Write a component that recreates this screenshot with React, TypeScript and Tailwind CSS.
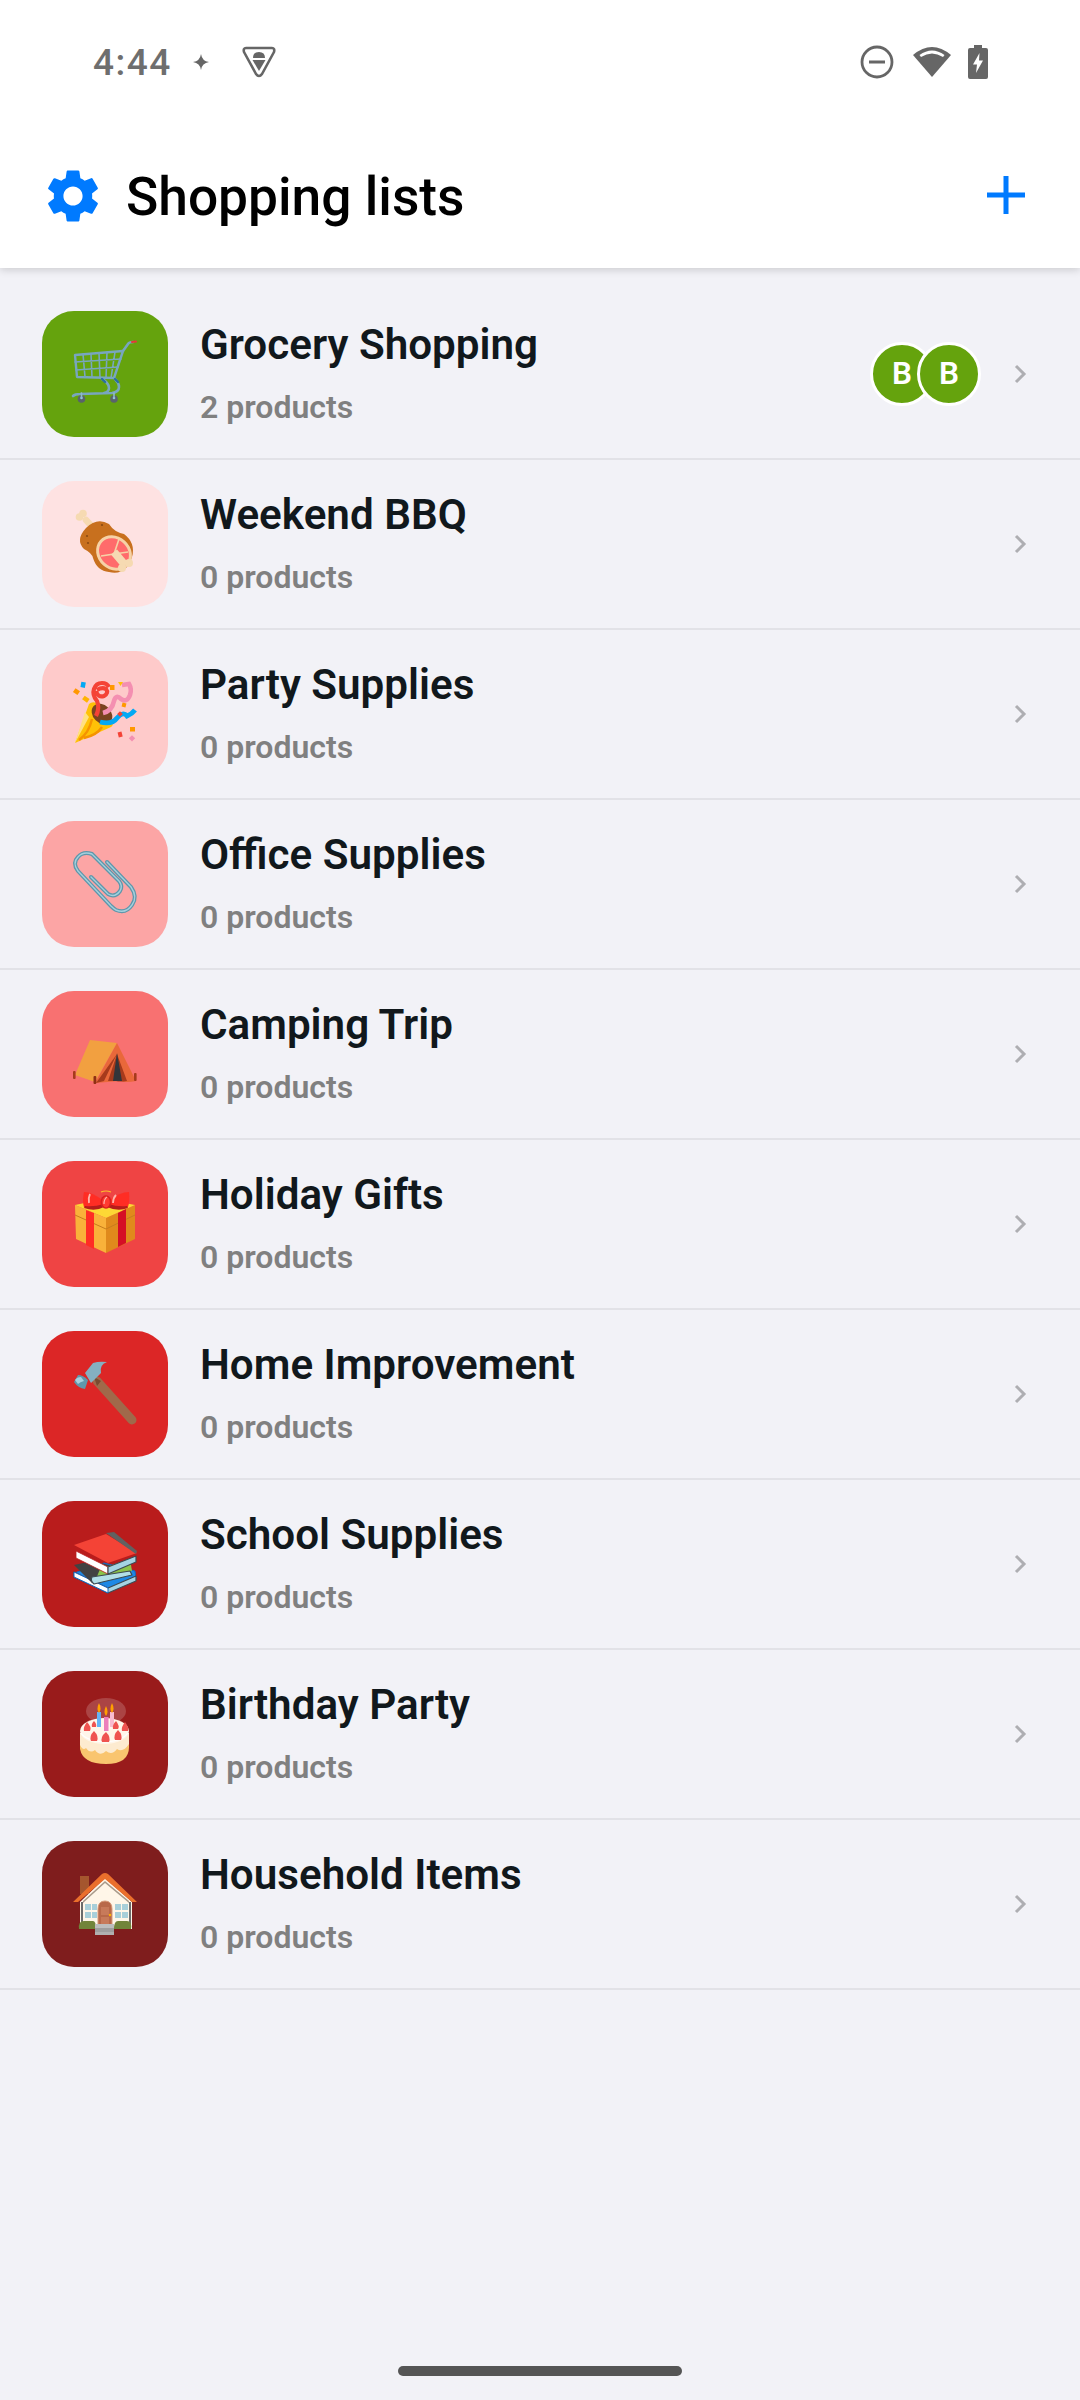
import React from "react";
import { MdSettings } from "react-icons/md";

const Cart = () => (
  <g fill="none" strokeLinecap="round" strokeLinejoin="round">
    <path d="M33 44 L81 40 L72 67 L35 66 Z" stroke="#78a6bf" strokeWidth="2.4" fill="none" />
    <path d="M33 51 L79 48 M34 59 L76 56 M41 43 L43 66 M49 43 L50 66 M57 42 L58 67 M65 41 L64 67 M73 41 L69 67" stroke="#78a6bf" strokeWidth="1.6" />
    <path d="M81 40 L86 33 Q87 31 91 31" stroke="#78a6bf" strokeWidth="2.6" />
    <path d="M90 31 L94 30.5" stroke="#e53935" strokeWidth="2" />
    <path d="M31 85 Q33 83 38 83 L70 82 Q77 81 77 76 Q77 72 73 68 M60 68 Q67 72 67 77 Q67 81 62 82" stroke="#78a6bf" strokeWidth="2.6" />
    <path d="M60 68 L63 71 M73 68 L76 71" stroke="#2a6f9e" strokeWidth="2.4" />
    <circle cx="39.5" cy="88" r="3.8" fill="#59636b" />
    <circle cx="72" cy="88" r="3.8" fill="#59636b" />
    <circle cx="39.5" cy="87" r="1.3" fill="#8fc4dc" />
    <circle cx="72" cy="87" r="1.3" fill="#8fc4dc" />
    <path d="M39.5 82 V86 M72 82 V86" stroke="#8fb8cc" strokeWidth="1.6" />
  </g>
);

const Meat = () => (
  <g>
    <path d="M44 39 L54 50" stroke="#f6dab2" strokeWidth="6.5" strokeLinecap="round" />
    <circle cx="37.5" cy="36" r="3.8" fill="#f6dab2" />
    <circle cx="41" cy="32.5" r="3.8" fill="#f6dab2" />
    <path d="M44 47 Q55 36 67 43 Q72 51 82 53 Q94 62 90 76 Q84 95 67 91 Q55 90 51 77 Q50 72 42 68 Q33 59 44 47 Z" fill="#c8701e" />
    <circle cx="45" cy="55" r="1.1" fill="#8a4a12" />
    <circle cx="46" cy="62" r="1.1" fill="#8a4a12" />
    <circle cx="60" cy="44" r="1.1" fill="#8a4a12" />
    <ellipse cx="72" cy="72" rx="16.5" ry="19" transform="rotate(-48 72 72)" fill="#f6d2a6" />
    <ellipse cx="72" cy="72" rx="13.5" ry="16" transform="rotate(-48 72 72)" fill="#ff6b6b" />
    <path d="M59 75 L72 73 L77 58 M72 73 L86 71" stroke="#f6d2a6" strokeWidth="1.6" fill="none" />
    <path d="M72 71 L83 84" stroke="#f6dab2" strokeWidth="8" strokeLinecap="butt" />
    <circle cx="80" cy="87" r="4" fill="#f6dab2" />
    <circle cx="87" cy="82" r="4" fill="#f6dab2" />
  </g>
);

const Party = () => (
  <g fill="none">
    <path d="M33 92 L47 53 Q50 50 55 52 L70 70 Q72 74 69 76 Z" fill="#ffc107" />
    <path d="M33 92 L43 61 L47 66 Z" fill="#ffe082" />
    <path d="M37 89 Q47 82 50 68 M42 87 Q55 84 60 76" stroke="#f59300" strokeWidth="2.4" />
    <ellipse cx="60" cy="63" rx="9" ry="11.5" transform="rotate(-45 60 63)" fill="#7a4420" />
    <path d="M54 65 Q58 57 55 50 Q50 44 52 38 Q54 32 60 32 Q65 32 67 36 M54 40 Q56 47 62 45 Q67 42 64 38 Q60 36 55 39" stroke="#f44336" strokeWidth="4.2" />
    <path d="M61 62 Q70 60 72 50 Q74 43 79 48 Q85 52 88 44 Q90 38 87 33 L80 34" stroke="#f48fb1" strokeWidth="4.6" />
    <path d="M58 71 Q70 74 75 67 Q81 60 85 65 Q90 63 93 59" stroke="#03a9f4" strokeWidth="4.8" />
    <rect x="32" y="38" width="5.5" height="4.5" fill="#ff9800" transform="rotate(35 34 40)" />
    <rect x="39" y="31" width="4.5" height="5.5" fill="#03a9f4" transform="rotate(10 41 33)" />
    <rect x="41" y="46" width="6" height="4.5" fill="#ffb300" transform="rotate(35 44 48)" />
    <rect x="68" y="34" width="4.5" height="5" fill="#ff9800" />
    <path d="M76 31 H81 L78.5 35 Z" fill="#ffc107" />
    <rect x="80" y="52" width="4" height="4" fill="#ff9800" transform="rotate(15 82 54)" />
    <rect x="76" y="61" width="4" height="4" fill="#f44336" transform="rotate(45 78 63)" />
    <rect x="88" y="76" width="5" height="4.5" fill="#ff9800" />
    <rect x="76" y="81" width="4" height="5" fill="#f44336" transform="rotate(-15 78 83)" />
    <rect x="88" y="85" width="4.5" height="4.5" fill="#f48fb1" transform="rotate(45 90 87)" />
  </g>
);

const Clip = () => (
  <g fill="none" strokeLinecap="round">
    <path d="M65 41 L89 66 Q96 76 90 84 Q84 93 74 89 Q72 88 69 85 L36 50 Q30 42 36 36 Q41 30 50 33 L77 60 Q81 65 78 70 Q73 77 66 73 L49 56" stroke="#5f97ab" strokeWidth="4" />
    <path d="M65 41 L89 66 Q96 76 90 84 Q84 93 74 89 Q72 88 69 85 L36 50 Q30 42 36 36 Q41 30 50 33 L77 60 Q81 65 78 70 Q73 77 66 73 L49 56" stroke="#a5d0dd" strokeWidth="1.4" />
  </g>
);

const Tent = () => (
  <g>
    <path d="M48 49 L75 52 L53 91 L33 84 Z" fill="#f2a040" />
    <path d="M75 52 L94 90 Q84 92 78 90 L53 92 Z" fill="#e9683a" />
    <path d="M75 63 L85 90 Q78 91 74 90 L66 90 Z M75 63 L62 90 L54 92 Z" fill="#a63a1c" />
    <path d="M75 62 L80 90 L71 90 Z" fill="#33353a" />
    <rect x="31" y="80" width="2.6" height="8" rx="1" fill="#a63a1c" />
    <rect x="51.5" y="85" width="2.8" height="8" rx="1" fill="#8e2f14" />
    <rect x="92" y="82" width="2.6" height="8" rx="1" fill="#a63a1c" />
  </g>
);

const Gift = () => (
  <g>
    <path d="M33 44 L64 57 V92 L34 78 Z" fill="#f9b23a" />
    <path d="M64 57 L93 44 V78 L64 92 Z" fill="#e08a1c" />
    <path d="M33 44 L62 38 L93 44 L64 57 Z" fill="#fdd835" />
    <path d="M33 54 L64 68 L93 54" stroke="#c77d1c" strokeWidth="1" fill="none" />
    <path d="M44 49 L52 52 V88 L44 84 Z" fill="#ff2d24" />
    <path d="M76 52 L84 48 V82 L76 86 Z" fill="#d50f25" />
    <path d="M62 40 Q50 31 42 31 Q40 40 42 46 Q52 49 62 44 Z" fill="#ff2d24" />
    <path d="M66 40 Q78 31 87 31 Q88 40 86 46 Q76 49 66 44 Z" fill="#ff2d24" />
    <path d="M42 47 Q53 51 62 46 L65 46 Q76 51 86 47 L85 45 Q76 46 66 43 L62 43 Q52 46 43 45 Z" fill="#b71c1c" />
    <ellipse cx="64" cy="41" rx="5.5" ry="6.8" fill="#d81f1f" />
    <ellipse cx="64" cy="41" rx="3.8" ry="5.4" fill="#ff3b30" />
    <path d="M62 43 Q62 38 65 36" stroke="#ffb4ab" strokeWidth="1.2" fill="none" />
    <path d="M47 42 Q46 37 48 33 M71 42 Q71 37 74 34" stroke="#ffb4ab" strokeWidth="1.8" fill="none" />
    <path d="M59 31 Q64 29 69 31" stroke="#fbc02d" strokeWidth="1.2" fill="none" />
  </g>
);

const Hammer = () => (
  <g>
    <path d="M55 50 L90 89" stroke="#a0694a" strokeWidth="9" strokeLinecap="round" />
    <path d="M52 46 L59 50 L55 55 Z" fill="#7a4a30" />
    <path d="M43 42 L51 32 Q57 30 65 31 Q57 34 59 42 L49 52 Z" fill="#84b0c1" />
    <path d="M36 44 Q41 44 46 49 L43 58 Q36 57 32 51 Z" fill="#5f97ab" />
    <path d="M33 49 Q35 46 39 46 L42 50 Q38 51 36 53 Z" fill="#a5d0dd" />
  </g>
);

const Books = () => (
  <g strokeLinejoin="round">
    <path d="M32 72 L65 88 L94 78 L93 70 L62 62 Z" fill="#1e88e5" stroke="#1565c0" strokeWidth="1" />
    <path d="M32 76 L66 92 L94 80 L94 75 L66 87 L32 71 Z" fill="#a5d3e3" stroke="#3e4a52" strokeWidth="1.2" />
    <path d="M32 76 L66 92 V87 L32 71 Z" fill="#ffffff" stroke="#1565c0" strokeWidth="1" />
    <path d="M32 64 L50 82 L90 74 L88 70 Q70 64 50 60 Z" fill="#424242" />
    <path d="M58 68 L88 58 L90 70 L54 78 Z" fill="#8bc34a" />
    <path d="M50 76 L88 70 L90 74 L52 83 Q48 80 50 76 Z" fill="#b2dfe8" stroke="#3e4a52" strokeWidth="1.2" />
    <path d="M32 44 L66 62 L95 52 L64 33 Z" fill="#f44336" />
    <path d="M64 32 L72 31 L95 50 L94 53 Z" fill="#616161" />
    <path d="M34 50 L66 66 V73 L34 57 Z" fill="#ffffff" stroke="#b71c1c" strokeWidth="0.8" />
    <path d="M66 66 L94 55 L94 61 L66 73 Z" fill="#a5d3e3" stroke="#3e4a52" strokeWidth="1.2" />
  </g>
);

const Cake = () => (
  <g>
    <ellipse cx="64" cy="40" rx="20" ry="13" fill="#ffffff" opacity="0.18" />
    <path d="M38 62 V78 Q41 93 64 93 Q87 93 87 76 V62 Z" fill="#f9c56f" />
    <path d="M38 62 V74 Q41 80 44 77 Q48 83 53 79 Q58 86 64 80 Q70 85 75 78 Q81 82 87 73 V62 Z" fill="#fdebd0" />
    <ellipse cx="62.5" cy="60" rx="24.5" ry="13" fill="#fff6ea" />
    <path d="M39 62 Q44 70 64 71 Q80 70 86 62" stroke="#ffffff" strokeWidth="1.2" fill="none" />
    <rect x="55" y="41" width="4" height="15" fill="#64b5f6" />
    <rect x="62" y="46" width="4.5" height="14" fill="#ec7fbb" />
    <rect x="68" y="41" width="4" height="15" fill="#f8bbd0" />
    <path d="M57 32 Q60 38 57 42 Q54 38 57 32 Z" fill="#ffa000" />
    <path d="M64 35 Q67 41 64 45 Q61 41 64 35 Z" fill="#ffa000" />
    <path d="M70 32 Q73 38 70 42 Q67 38 70 32 Z" fill="#ffa000" />
    <g fill="#ef5350">
      <path d="M45 51 Q50 56 48 60 H42 Q41 56 45 51 Z" />
      <path d="M74 50 Q78 55 76 58 H71 Q70 54 74 50 Z" />
      <path d="M83 51 Q87 56 86 60 H80 Q79 56 83 51 Z" />
      <path d="M52 60 Q57 65 55 70 H49 Q47 65 52 60 Z" />
      <path d="M64 61 Q69 66 67 71 H60 Q58 66 64 61 Z" />
      <path d="M76 59 Q81 64 79 69 H73 Q71 64 76 59 Z" />
      <path d="M52 50 Q55 53 54 56 H50 Q49 53 52 50 Z" />
    </g>
  </g>
);

const House = () => (
  <g>
    <rect x="38" y="35" width="9" height="18" fill="#a5562e" />
    <path d="M38 61 L63 37 L90 61 V88 H38 Z" fill="#fff6e8" />
    <path d="M41 60 L63 40 L87 60 V62 L63 42 L41 62 Z" fill="#a89a8a" />
    <path d="M31 61 L60 33 Q63 31 66 33 L95 61 H90 L63 38 L36 61 Z" fill="#ea6f2c" />
    <rect x="39" y="61" width="2" height="26" fill="#6b6b6b" />
    <rect x="87" y="61" width="2" height="26" fill="#6b6b6b" />
    <g fill="#a8cfd9">
      <rect x="43" y="63" width="6" height="6" />
      <rect x="50" y="63" width="5" height="6" />
      <rect x="43" y="71" width="6" height="6" />
      <rect x="50" y="71" width="5" height="6" />
      <rect x="73" y="63" width="6" height="6" />
      <rect x="80" y="63" width="6" height="6" />
      <rect x="73" y="71" width="6" height="6" />
      <rect x="80" y="71" width="6" height="6" />
    </g>
    <path d="M56 86 V68 Q56 60 63 60 Q70 60 70 68 V86 Z" fill="#b8694a" stroke="#d69a7a" strokeWidth="1" />
    <rect x="59" y="66" width="8" height="8" fill="#c77a5a" />
    <rect x="59" y="76" width="8" height="8" fill="#c77a5a" />
    <circle cx="68" cy="74" r="1.2" fill="#ffb300" />
    <path d="M37 88 Q36 80 42 80 H51 Q54 80 54 88 Z" fill="#71843a" />
    <path d="M72 88 Q72 80 76 80 H85 Q90 80 89 88 Z" fill="#71843a" />
    <rect x="53" y="83" width="19" height="4" fill="#bdbdbd" />
    <rect x="53" y="87" width="19" height="4" fill="#9e9e9e" />
    <rect x="53" y="91" width="19" height="3" fill="#b0b0b0" />
  </g>
);

const items: { title: string; sub: string; bg: string; art: React.ReactNode; avatars?: boolean }[] = [
  { title: "Grocery Shopping", sub: "2 products", bg: "bg-[#65a30d]", art: <Cart />, avatars: true },
  { title: "Weekend BBQ", sub: "0 products", bg: "bg-[#fee2e2]", art: <Meat /> },
  { title: "Party Supplies", sub: "0 products", bg: "bg-[#fecaca]", art: <Party /> },
  { title: "Office Supplies", sub: "0 products", bg: "bg-[#fca5a5]", art: <Clip /> },
  { title: "Camping Trip", sub: "0 products", bg: "bg-[#f87171]", art: <Tent /> },
  { title: "Holiday Gifts", sub: "0 products", bg: "bg-[#ef4444]", art: <Gift /> },
  { title: "Home Improvement", sub: "0 products", bg: "bg-[#dc2626]", art: <Hammer /> },
  { title: "School Supplies", sub: "0 products", bg: "bg-[#b91c1c]", art: <Books /> },
  { title: "Birthday Party", sub: "0 products", bg: "bg-[#991b1b]", art: <Cake /> },
  { title: "Household Items", sub: "0 products", bg: "bg-[#7f1d1d]", art: <House /> },
];

const Avatar = ({ overlap }: { overlap?: boolean }) => (
  <div
    className={`flex h-[64px] w-[64px] items-center justify-center rounded-full border-[3px] border-white bg-[#65a30d] text-[31.5px] font-semibold text-white ${overlap ? "-ml-[17px]" : ""}`}
  >
    B
  </div>
);

const Chevron = () => (
  <svg width="14" height="20" viewBox="0 0 14 20" className="shrink-0">
    <path d="M3 2 L11 10 L3 18" fill="none" stroke="#aeaeb2" strokeWidth="3" />
  </svg>
);

const Row = ({ item }: { item: (typeof items)[number] }) => (
  <div className="flex h-[170px] items-center border-b-2 border-[#e2e2e7] pl-[42px] pr-[53px]">
    <div className={`h-[126px] w-[126px] shrink-0 rounded-[32px] ${item.bg}`}>
      <svg width="126" height="126" viewBox="0 0 126 126">
        {item.art}
      </svg>
    </div>
    <div className="ml-[32px] flex min-w-0 flex-1 flex-col pb-[3px]">
      <div className="text-[42.2px] font-semibold leading-[52px] text-[#11181c]">{item.title}</div>
      <div className="mt-[16px] text-[32px] font-semibold leading-[40px] text-[#808080]">{item.sub}</div>
    </div>
    {item.avatars && (
      <div className="mr-[32px] flex">
        <Avatar />
        <Avatar overlap />
      </div>
    )}
    <Chevron />
  </div>
);

export default function App() {
  return (
    <div className="flex h-[2400px] w-[1080px] flex-col bg-[#f2f2f7] font-['Roboto',sans-serif]">
      <header className="relative z-10 h-[268px] shrink-0 bg-white shadow-[0_2px_8px_rgba(0,0,0,0.16)]">
        <div className="flex h-[124px] items-center pl-[93px] pr-[92px]">
          <span className="text-[37px] font-medium leading-none tracking-[1.5px] text-[#6e6e6e]">4:44</span>
          <svg width="16" height="16" viewBox="0 0 16 16" className="ml-[21px]">
            <path d="M8 0 Q9 7 16 8 Q9 9 8 16 Q7 9 0 8 Q7 7 8 0 Z" fill="#666666" />
          </svg>
          <svg width="34" height="34" viewBox="0 0 34 34" className="ml-[33px]">
            <path d="M4 3 H30 Q33 3 32 7 L20 29 Q17 33 14 29 L2 7 Q1 3 4 3 Z" fill="none" stroke="#666666" strokeWidth="2.6" strokeLinejoin="round" />
            <path d="M11 13 Q11 7 17 7 Q23 7 23 13 Z" fill="#666666" />
            <path d="M10.5 15 H23.5 L17 26 Z" fill="#666666" />
          </svg>
          <div className="flex-1" />
          <svg width="34" height="34" viewBox="0 0 34 34">
            <circle cx="17" cy="17" r="15" fill="none" stroke="#666666" strokeWidth="2.8" />
            <rect x="9" y="15.5" width="16" height="3" fill="#666666" />
          </svg>
          <svg width="40" height="34" viewBox="0 0 40 34" className="ml-[18px]">
            <path d="M20 32 L1 10 Q20 -6 39 10 Z" fill="#666666" />
            <path d="M7.5 10 Q20 1 32.5 10 L31 12 Q20 5 9 12 Z" fill="#ffffff" />
          </svg>
          <svg width="20" height="34" viewBox="0 0 20 34" className="ml-[16px]">
            <path d="M6 0 H14 V3 H18 Q20 3 20 5 V32 Q20 34 18 34 H2 Q0 34 0 32 V5 Q0 3 2 3 H6 Z" fill="#666666" />
            <path d="M11.5 8 L5 19.5 H9 L8 28 L15 15.5 H11 Z" fill="#ffffff" />
          </svg>
        </div>
        <div className="flex h-[144px] items-center pl-[41px] pr-[55px]">
          <MdSettings size={64} color="#007aff" className="shrink-0" />
          <h1 className="ml-[21px] flex-1 pt-[3px] text-[53.3px] font-medium leading-none text-black">Shopping lists</h1>
          <svg width="38" height="38" viewBox="0 0 38 38" className="-mt-[2px]">
            <rect x="16.5" y="0" width="5" height="38" fill="#007aff" />
            <rect x="0" y="16.5" width="38" height="5" fill="#007aff" />
          </svg>
        </div>
      </header>
      <main className="flex-1 pt-[22px]">
        {items.map((item) => (
          <Row key={item.title} item={item} />
        ))}
      </main>
      <div className="flex shrink-0 justify-center pb-[24px]">
        <div className="h-[10px] w-[284px] rounded-full bg-[#555555]" />
      </div>
    </div>
  );
}
